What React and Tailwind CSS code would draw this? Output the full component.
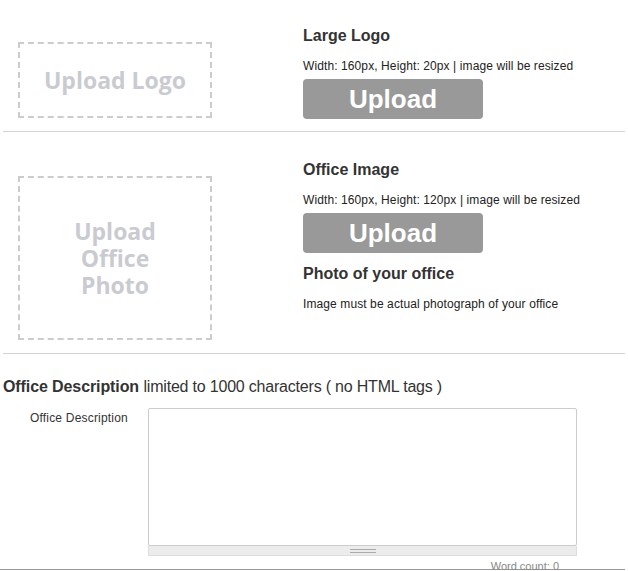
import React from "react";

const sans = { fontFamily: '"Liberation Sans", Arial, sans-serif' };

function DropBox({ children, className }) {
  return (
    <div
      className={`ml-[18px] w-[194px] border-2 border-dashed border-[#cccccc] flex items-center justify-center text-center text-[23px] font-bold leading-[27px] text-[#c9cbd1] ${className}`}
      style={{ fontFamily: '"Open Sans", "Noto Sans", sans-serif' }}
    >
      {children}
    </div>
  );
}

function UploadButton({ className }) {
  return (
    <button className={`w-[180px] h-[40px] rounded-[4px] bg-[#999999] text-white text-[26px] font-bold leading-none ${className}`}>
      Upload
    </button>
  );
}

export default function App() {
  return (
    <div className="w-[628px] h-[571px] bg-white overflow-hidden text-[#222]" style={sans}>
      {/* logo row */}
      <div className="flex mx-[3px] border-b border-[#d4d4d4] pb-[12px]">
        <div className="w-[303px] -ml-[3px]">
          <DropBox className="mt-[42px] h-[76px]">Upload Logo</DropBox>
        </div>
        <div className="pt-[27px]">
          <h3 className="text-[16px] font-bold leading-[18px] text-[#333]">Large Logo</h3>
          <p className="mt-[14px] text-[12px] leading-[14px] tracking-[0.1px]">
            Width: 160px, Height: 20px | image will be resized
          </p>
          <UploadButton className="mt-[6px]" />
        </div>
      </div>

      {/* office image row */}
      <div className="flex mx-[3px] border-b border-[#d4d4d4] pb-[13px]">
        <div className="w-[303px] -ml-[3px]">
          <DropBox className="mt-[44px] h-[164px]">
            Upload
            <br />
            Office
            <br />
            Photo
          </DropBox>
        </div>
        <div className="pt-[29px]">
          <h3 className="text-[16px] font-bold leading-[18px] text-[#333]">Office Image</h3>
          <p className="mt-[14px] text-[12px] leading-[14px] tracking-[0.1px]">
            Width: 160px, Height: 120px | image will be resized
          </p>
          <UploadButton className="mt-[6px]" />
          <h3 className="mt-[12px] text-[16px] font-bold leading-[18px] text-[#333]">Photo of your office</h3>
          <p className="mt-[14px] text-[12px] leading-[14px] tracking-[0.1px]">
            Image must be actual photograph of your office
          </p>
        </div>
      </div>

      {/* description */}
      <div className="pt-[23px] pl-[3px]">
        <h2 className="text-[16px] leading-[20px] text-[#333]">
          <span className="font-bold tracking-[-0.1px]">Office Description</span>{" "}
          <span className="tracking-[-0.2px]">limited to 1000 characters ( no HTML tags )</span>
        </h2>
        <div className="flex mt-[11px]">
          <label className="w-[125px] text-right text-[12px] leading-[14px] pt-[3px] text-[#333] tracking-[0.2px]">
            Office Description
          </label>
          <div className="ml-[20px] w-[429px]">
            <div className="h-[138px] border border-[#cccccc] rounded-[2px] bg-white" />
            <div className="h-[10px] bg-[#ececec] border-x border-b border-[#dddddd] flex items-center justify-center">
              <div className="w-[26px] flex flex-col gap-[2px]">
                <div className="h-px bg-[#aaaaaa]" />
                <div className="h-px bg-[#aaaaaa]" />
              </div>
            </div>
            <p className="text-right pr-[18px] text-[11px] leading-[12px] mt-[4px] text-[#888]">Word count: 0</p>
          </div>
        </div>
        <div className="-mt-[3px] -ml-[3px] w-[625px] border-b border-[#999999]" />
      </div>
    </div>
  );
}
